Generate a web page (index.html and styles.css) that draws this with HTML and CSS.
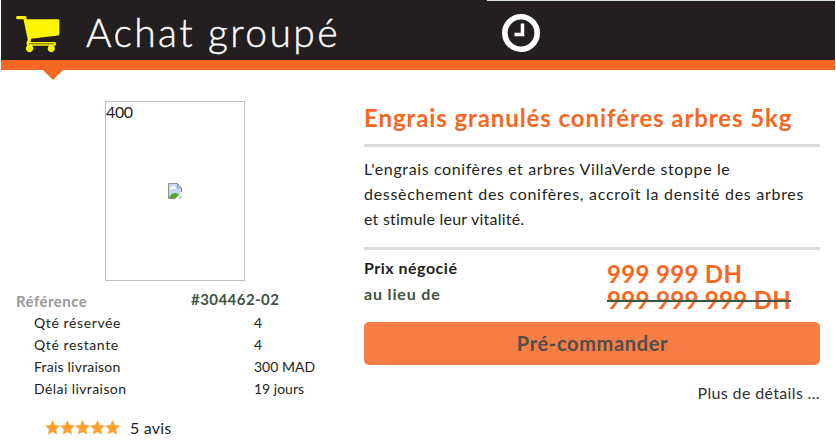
FILE: index.html
```html
<!DOCTYPE html>
<html lang="fr">
<head>
<meta charset="utf-8">
<title>Achat groupé</title>
<link rel="stylesheet" href="styles.css">
</head>
<body>
<header class="banner">
  <svg class="cart" viewBox="0 0 44 38"><path d="M1.500 1H9q1.500 0 1.700 3.300H42q1.300 0 1.300 1.300V19q0 1.200-1.200 1.400L15 23.700l-.5 3.300h24q1.400 0 1.400 1.400v1q0 1.400-1.400 1.400h-1a3.600 3.600 0 1 1-4.400 0H16a3.600 3.600 0 1 1-4.800 0l-.8-2.800 1.400-3.200L7.500 4.300h-6Q0 4.300 0 2.600T1.500 1z"/><path class="gap" d="M13 28.800h25"/></svg>
  <h1 class="banner-title">Achat groupé</h1>
  <svg class="clock" viewBox="0 0 38 38"><circle cx="19" cy="19" r="16.200"/><path d="M20.500 9.500V20.500H12.500"/></svg>
</header>
<main class="product">
  <section class="summary">
    <div class="photo">
      <span class="photo-alt">400</span>
      <svg class="broken" viewBox="0 0 14 16"><path class="sky" d="M.5.500h8.800L13.500 5v10.500H.5z"/><path class="cloud" d="M2 6h6V4.500H7V3H4v1.500H2z"/><path class="hill" d="M1 15q2-5 6-5t6 5z"/><path class="tear" d="M7 16l7-7v3l-4 4z"/><path class="edge" d="M7.500 15.500h-7V.500h8.800L13.500 5v4M9.500.500V5h4"/></svg>
    </div>
    <div class="reference"><span class="ref-label">Référence</span><span class="ref-value">#304462-02</span></div>
    <dl class="facts">
      <dt class="spread">Qté réservée</dt><dd>4</dd>
      <dt class="spread">Qté restante</dt><dd>4</dd>
      <dt class="tight">Frais livraison</dt><dd>300 MAD</dd>
      <dt class="medium">Délai livraison</dt><dd>19 jours</dd>
    </dl>
    <div class="rating"><svg class="stars" viewBox="0 0 75 15"><defs><path id="star" d="M7.500 0l2.200 4.900 5.300.6-3.900 3.700 1 5.300-4.600-2.600-4.600 2.600 1-5.300L0 5.500l5.300-.6z"/></defs><use href="#star"/><use href="#star" x="15"/><use href="#star" x="30"/><use href="#star" x="45"/><use href="#star" x="60"/></svg><span class="tight">5 avis</span></div>
  </section>
  <section class="offer">
    <h2 class="name">Engrais granulés coniféres arbres 5kg</h2>
    <p class="description"><span class="spread">L'engrais conifères et arbres VillaVerde stoppe le</span><br><span class="wide">dessèchement des conifères, accroît la densité des arbres</span><br><span class="tight">et stimule leur vitalité.</span></p>
    <div class="prices">
      <span class="deal-label">Prix négocié</span><span class="price">999 999 DH</span>
      <span class="old-label">au lieu de</span><span class="price old">999 999 999 DH</span>
    </div>
    <button class="order">Pré-commander</button>
    <a class="more">Plus de détails ...</a>
  </section>
</main>
</body>
</html>
```

FILE: styles.css
```css
* { box-sizing: border-box; }
body { margin: 0; background: #fff; color: #231f20; font: 16px/25px Lato, sans-serif; font-variant-ligatures: none; }
h1, h2, p, dl, dd { margin: 0; }
.tight { letter-spacing: .22px; }
.medium { letter-spacing: .42px; }
.spread { letter-spacing: .61px; }
.wide { letter-spacing: .71px; }
.banner { display: flex; position: relative; height: 70px; margin: 0 1px; background: #231f20; border-bottom: 10px solid #f56723; padding-left: 15px; }
.banner::before { content: ""; position: absolute; top: 0; left: 486px; right: 0; height: 1px; background: #dbe6e1; }
.banner::after { content: ""; position: absolute; top: 70px; left: 42px; border: 10px solid transparent; border-top-color: #f56723; border-bottom: 0; }
.cart { width: 44px; height: 38px; margin-top: 15px; fill: #fff600; }
.gap { stroke: #231f20; stroke-width: .7; }
.banner-title { width: 416px; margin-left: 26px; color: #fff; font-size: 39px; font-weight: 300; line-height: 64px; letter-spacing: 2.4px; -webkit-text-stroke: .4px #fff; }
.clock { width: 38px; height: 38px; margin-top: 14px; fill: none; stroke: #fff; }
.clock circle { stroke-width: 5.600; }
.clock path { stroke-width: 3.500; }
.product { display: grid; grid-template-columns: 318px 456px; column-gap: 30px; padding: 31px 16px 0; }
.photo { display: flex; position: relative; align-items: center; justify-content: center; width: 140px; height: 180px; margin-left: 89px; border: 1px solid #c0c0c0; }
.photo-alt { position: absolute; left: 0; top: -3px; letter-spacing: -.4px; }
.broken { width: 14px; height: 16px; }
.sky { fill: #c5d7f5; }
.cloud { fill: #fff; }
.hill { fill: #55a932; }
.tear { fill: #fff; }
.edge { fill: none; stroke: #919191; }
.reference { display: grid; grid-template-columns: 175px 1fr; height: 31px; font-weight: 700; font-size: 15px; line-height: 36px; letter-spacing: .45px; }
.ref-label { color: #999; line-height: 40px; }
.ref-value { color: #3f5340; }
.facts { display: grid; grid-template-columns: 220px 1fr; margin-left: 18px; font-size: 14px; line-height: 22px; }
.rating { display: flex; align-items: center; gap: 10px; margin: 15px 0 0 29px; }
.stars { width: 75px; height: 15px; fill: #ffa133; }
.name { height: 46px; border-bottom: 3px solid #dcdcdc; color: #f56723; font-size: 24px; line-height: 33px; letter-spacing: .91px; white-space: nowrap; }
.description { height: 103px; padding-top: 9px; border-bottom: 3px solid #dcdcdc; white-space: nowrap; }
.prices { display: grid; grid-template-columns: 243px 1fr; grid-template-rows: 26px 26px; margin-top: 10px; font-weight: 700; line-height: 26px; }
.prices > span { justify-self: start; }
.deal-label, .old-label { margin-top: -5px; letter-spacing: .5px; }
.old-label { color: #3f5340; letter-spacing: .85px; }
.price { color: #f56723; font-size: 24px; line-height: 28px; letter-spacing: .33px; }
.old { text-decoration: line-through #3f5340 2px; }
.order { display: block; width: 100%; height: 43px; margin-top: 10px; padding: 0 0 0 1px; border: 0; border-radius: 5px; background: #f67d43; color: #514e4d; font: 700 20px/43px Lato, sans-serif; letter-spacing: .65px; }
.more { display: block; margin-top: 15px; text-align: right; color: #332f30; letter-spacing: .35px; }
```
